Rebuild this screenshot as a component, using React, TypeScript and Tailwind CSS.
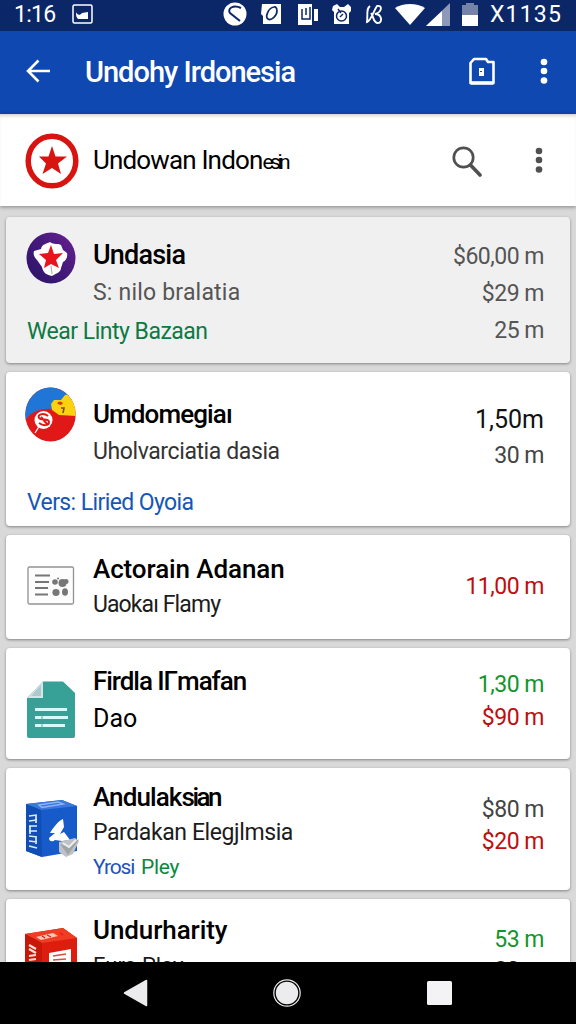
import type { ReactNode } from 'react';
import clsx from 'clsx';

type Line = { text: ReactNode; className: string };

type Item = {
  id: string;
  card: string;
  icon: ReactNode;
  iconClass: string;
  linesClass: string;
  lines: Line[];
  footer?: Line;
  valuesClass: string;
  values: Line[];
};

const UndasiaIcon = () => (
  <svg width="50" height="52" viewBox="0 0 50 52">
    <defs>
      <linearGradient id="purple" x1="0" y1="1" x2="1" y2="0">
        <stop offset="0" stopColor="#2a1466" />
        <stop offset="0.5" stopColor="#43197a" />
        <stop offset="1" stopColor="#6a2191" />
      </linearGradient>
    </defs>
    <ellipse cx="25" cy="26" rx="24.5" ry="25.5" fill="url(#purple)" />
    <path
      d="M24 10C28 13 32 11 35 13L37 18 41 21C42 25 40 29 37 30L35 36C35 40 31 41 26 44C21 43 17 41 16 35L11 28C8 25 7 22 8 19L15 17C16 12 20 12 24 10z"
      fill="#fff"
    />
    <path
      d="M25 13l3 9 9-1-7 7 3 8-8-4-7 4 2-8-7-6 9-1z"
      fill="#e8141c"
    />
    <path d="M25 34l1 8" stroke="#aaa" strokeWidth="1" />
  </svg>
);

const UmdomegiaIcon = () => (
  <svg width="51" height="55" viewBox="0 0 51 55">
    <defs>
      <clipPath id="disc">
        <ellipse cx="25.5" cy="27.5" rx="25.2" ry="27" />
      </clipPath>
    </defs>
    <g clipPath="url(#disc)">
      <rect width="51" height="55" fill="#e01818" />
      <path d="M0 0H51V12L27 22C16 21 5 25 0 34z" fill="#2076d6" />
      <path d="M40 8L51 6V29L34 28 27 23 26 17 29 13 36 13z" fill="#fbd20f" />
      <path d="M32 16q3-3 6 0q-2 4-6 0z" fill="#d53a14" />
      <path d="M36 21h3l-1 5" fill="none" stroke="#78501c" strokeWidth="1.6" />
      <circle cx="18.500" cy="33" r="9" fill="#fff" />
      <path d="M15 38L10 46" stroke="#fff" strokeWidth="1.2" />
      <path
        d="M23 29C18 25 12 28 14 31S24 31 24 35S18 39 14 36M16 30L22 37"
        fill="none"
        stroke="#e01818"
        strokeWidth="2"
      />
    </g>
  </svg>
);

const NewsIcon = () => (
  <svg width="48" height="40" viewBox="0 0 48 40">
    <rect x="1" y="1" width="45.500" height="37" rx="1.500" fill="#fdfdfd" stroke="#929292" strokeWidth="1.300" />
    <path d="M8 9.500h15M8 16h14M8 22h13M8 28.500h13" stroke="#777" strokeWidth="2" />
    <g fill="#777">
      <circle cx="28" cy="16" r="2.800" />
      <circle cx="35.500" cy="17" r="4" />
      <circle cx="39" cy="15.500" r="2.500" />
      <circle cx="31" cy="12.500" r="1" />
      <ellipse cx="29" cy="26.500" rx="3.600" ry="3.400" />
      <ellipse cx="38" cy="26" rx="3" ry="3.800" />
    </g>
  </svg>
);

const DocIcon = () => (
  <svg width="48" height="58" viewBox="0 0 48 58">
    <path d="M16 .5H36L48 12V55a2 2 0 0 1-2 2H2a2 2 0 0 1-2-2V17z" fill="#37a097" />
    <path d="M16 .5V17H0z" fill="#d5e4e7" />
    <path d="M14 4V15H4z" fill="#afc8cd" />
    <path d="M8 28.500H40M8 36.500H41M8 44.500H38" stroke="#d5fbf6" strokeWidth="2.800" />
    <path d="M15 35V46" stroke="#37a097" strokeWidth=".8" />
  </svg>
);

const BlueBoxIcon = () => (
  <svg width="54" height="60" viewBox="0 0 54 60">
    <path d="M0 5L36 1 51 7V52L16 58 0 52z" fill="#175bcb" />
    <path d="M0 5L36 1 51 7 15 11z" fill="#3b78dc" />
    <path d="M0 5L15 11 16 58 0 52z" fill="#104eb5" />
    <path d="M13 6L32 3 37 5 16 8.500z" fill="none" stroke="#8bb4f4" strokeWidth="1.600" />
    <path
      d="M3 17l8-1M3 22l8-1M3 27l8 0M3 32l8 0M3 37l8 1M3 42l8 1M3 47l8 2M10 16v8M4 27v8M10 38v7"
      stroke="#dcebff"
      strokeWidth="1.700"
    />
    <path d="M37 20C32 22 27 29 24 34L29 34 23 39C23 43 27 43 29 41L36 42 44 41 38 33 34 35 38 28z" fill="#fff" />
    <path d="M33 43L49 39 53 42 47 55 40 58 33 53z" fill="#bfc2c5" />
    <path d="M34 45L42 48 53 40 42 56z" fill="#9fa4a7" />
    <path d="M37 44L43 48 50 41" fill="none" stroke="#eee" strokeWidth="1.800" />
  </svg>
);

const RedBoxIcon = () => (
  <svg width="53" height="60" viewBox="0 0 53 60">
    <path d="M0 6L38 0 52 10V60H0z" fill="#dd1d0d" />
    <path d="M0 6L38 0 52 10 17 15z" fill="#ee3d23" />
    <path d="M0 6L17 15V60H0z" fill="#c8160a" />
    <path d="M11 9L28 5 33 8 16 12z" fill="#ffc4b5" />
    <path d="M17 8l3 2M22 7l4 2M35 5l3 2" stroke="#dd1d0d" strokeWidth="1.300" />
    <path d="M4 17l7 4M4 21l7 4M4 28l7-1M4 32l7-1M4 37l7-1" stroke="#ffe0d8" strokeWidth="2.200" />
    <path d="M24 25L46 21V40H24z" fill="#fff" />
    <path d="M28 28l13-2M28 32l13-1M28 36h8" stroke="#d8503c" strokeWidth="1.700" />
  </svg>
);

const title = 'text-[26px] font-medium text-black';
const sub = 'text-[23px] text-[#1c1c1c]';
const value = 'text-[23px] tracking-[-0.5px]';

const items: Item[] = [
  {
    id: 'undasia',
    card: 'h-[146px] bg-[#f0f0f0]',
    icon: <UndasiaIcon />,
    iconClass: '-mt-[5px] ml-[1px]',
    linesClass: 'pt-[20px] leading-[37px]',
    lines: [
      { text: 'Undasia', className: 'text-[27px] font-medium tracking-[-0.8px] text-black' },
      { text: 'S: nilo bralatia', className: 'text-[23px] tracking-[0.2px] text-[#555]' },
    ],
    footer: { text: 'Wear Linty Bazaan', className: 'mt-[2px] tracking-[-0.5px] text-[#0b7a43]' },
    valuesClass: 'pt-[21px] leading-[37px]',
    values: [
      { text: '$60,00 m', className: 'text-[#555]' },
      { text: '$29 m', className: 'text-[#555]' },
      { text: '25 m', className: 'text-[#555]' },
    ],
  },
  {
    id: 'umdomegiai',
    card: 'h-[154px] bg-white',
    icon: <UmdomegiaIcon />,
    iconClass: '-mt-[9px]',
    linesClass: 'pt-[24px] leading-[37px]',
    lines: [
      { text: 'Umdomegiaı', className: clsx(title, 'tracking-[-0.9px]') },
      { text: 'Uholvarciatia dasia', className: 'text-[23px] tracking-[-0.4px] text-[#333]' },
    ],
    footer: { text: 'Vers: Liried Oyoia', className: 'mt-[14px] tracking-[-0.6px] text-[#1556b8]' },
    valuesClass: 'pt-[30px] leading-[36px]',
    values: [
      { text: '1,50m', className: 'text-[25px] tracking-[0px] text-[#111]' },
      { text: '30 m', className: 'text-[#444]' },
    ],
  },
  {
    id: 'actorain',
    card: 'h-[104px] bg-white',
    icon: <NewsIcon />,
    iconClass: 'mt-[15px] ml-[2px]',
    linesClass: 'pt-[16px] leading-[36px]',
    lines: [
      { text: 'Actorain Adanan', className: clsx(title, 'tracking-[-0.1px]') },
      { text: 'Uaokaı Flamy', className: clsx(sub, 'tracking-[-0.9px]') },
    ],
    valuesClass: 'pt-[34px] leading-[36px]',
    values: [{ text: '11,00 m', className: 'text-[#c00d10]' }],
  },
  {
    id: 'firdla',
    card: 'h-[111px] bg-white',
    icon: <DocIcon />,
    iconClass: 'mt-[18px] ml-[2px]',
    linesClass: 'pt-[15px] leading-[37px]',
    lines: [
      { text: 'Firdla IΓmafan', className: clsx(title, 'tracking-[-1.05px]') },
      { text: 'Dao', className: 'text-[25px] text-black' },
    ],
    valuesClass: 'pt-[20px] leading-[33px]',
    values: [
      { text: '1,30 m', className: 'text-[#12962b]' },
      { text: '$90 m', className: 'text-[#c00d10]' },
    ],
  },
  {
    id: 'andulaksian',
    card: 'h-[122px] bg-white',
    icon: <BlueBoxIcon />,
    iconClass: 'mt-[19px] ml-[1px]',
    linesClass: 'pt-[12px] leading-[35px]',
    lines: [
      {
        text: (
          <>
            Andulak<span className="tracking-[-2.500px]">sian</span>
          </>
        ),
        className: clsx(title, 'tracking-[-0.9px]'),
      },
      { text: 'Pardakan Elegjlmsia', className: clsx(sub, 'tracking-[-0.4px]') },
      {
        text: (
          <>
            <span className="mr-[2px] tracking-[-1.200px] text-[#2352bd]">Yrosi</span> Pley
          </>
        ),
        className: 'text-[21px] tracking-[-0.3px] text-[#0d8740]',
      },
    ],
    valuesClass: 'pt-[26px] leading-[32px]',
    values: [
      { text: '$80 m', className: 'text-[#444]' },
      { text: '$20 m', className: 'text-[#c00d10]' },
    ],
  },
  {
    id: 'undurharity',
    card: 'h-[120px] bg-white',
    icon: <RedBoxIcon />,
    iconClass: 'mt-[15px]',
    linesClass: 'pt-[14px] leading-[35px]',
    lines: [
      { text: 'Undurharity', className: clsx(title, 'tracking-[-0.1px]') },
      { text: 'Eura Play', className: 'text-[22px] text-[#1c1c1c]' },
    ],
    valuesClass: 'pt-[25px] leading-[31px]',
    values: [
      { text: '53 m', className: 'text-[#12962b]' },
      { text: '80 m', className: 'text-[#222]' },
    ],
  },
];

const MoreDots = ({ className }: { className?: string }) => (
  <svg width="10" height="28" viewBox="0 0 10 28" fill="currentColor" className={className}>
    <circle cx="5" cy="5" r="3.300" />
    <circle cx="5" cy="14" r="3.300" />
    <circle cx="5" cy="23.500" r="3.300" />
  </svg>
);

const StatusBar = () => (
  <div className="flex h-[31px] shrink-0 items-center bg-[#0c2768] pr-[13px] pl-[14px] text-[23px] leading-[28px] text-white">
    <span className="-mt-[2px] w-[58px] tracking-[-0.7px]">1:16</span>
    <svg width="21" height="20" viewBox="0 0 21 20" className="-mt-[3px]">
      <rect x="1" y="1" width="19" height="18" rx="1.500" fill="none" stroke="#fff" strokeWidth="1.500" />
      <path d="M4 8C5 11 8 12 10 9L16 8V15H6C4 13 4 11 4 8z" fill="#fff" />
    </svg>
    <div className="-mt-[3px] ml-auto flex items-center">
      <svg width="24" height="24" viewBox="0 0 24 24">
        <circle cx="12" cy="12" r="11.500" fill="#fff" />
        <path d="M18 6C10 2 4 7 7 11L17 19" fill="none" stroke="#0c2768" strokeWidth="2" />
      </svg>
      <svg width="20" height="20" viewBox="0 0 20 20" className="ml-[14px]">
        <path d="M1 0H20V20H2V12L0 10z" fill="#fff" />
        <path d="M13 3C7 4 4 13 7 15S16 12 16 7S13 3 13 3z" fill="none" stroke="#0c2768" strokeWidth="1.700" />
      </svg>
      <svg width="20" height="21" viewBox="0 0 20 21" className="ml-[17px]">
        <path d="M0 0H14V21H0zM16 5H20V17H16z" fill="#fff" />
        <path d="M4 5V15H12V3M8 4V11" fill="none" stroke="#0c2768" strokeWidth="1.500" />
      </svg>
      <svg width="20" height="21" viewBox="0 0 20 21" className="ml-[14px]">
        <path d="M1 2L5 0 8 3H12L16 0 19 3V7L17 9V20H2V8L0 6z" fill="#fff" />
        <circle cx="9.500" cy="12" r="5" fill="none" stroke="#0c2768" strokeWidth="1.500" />
        <path d="M6 5L9 9M11 10L8 13" stroke="#0c2768" strokeWidth="1.400" />
      </svg>
      <svg width="18" height="21" viewBox="0 0 18 21" className="ml-[13px]" fill="none" stroke="#fff" strokeWidth="1.900">
        <path d="M5 2C1 5 3 9 2 18C6 17 8 8 12 2C18 1 17 8 10 10C17 10 18 19 13 19S9 13 6 9" />
      </svg>
      <svg width="30" height="22" viewBox="0 0 30 22" className="ml-[12px]">
        <path d="M0 5C8-.5 22-.5 30 5L15 22z" fill="#fff" />
      </svg>
      <svg width="24" height="23" viewBox="0 0 24 23" className="ml-[1px]">
        <path d="M24 0V23H0z" fill="#8e98b8" />
        <path d="M16 8V23H0z" fill="#fff" />
      </svg>
      <svg width="16" height="23" viewBox="0 0 16 23" className="ml-[12px]">
        <path d="M0 2H4V0H12V2H16V12H0z" fill="#7683a9" />
        <path d="M0 12H16V23H0z" fill="#fff" />
      </svg>
    </div>
    <span className="-mt-[2px] ml-[12px] w-[73px] tracking-[1.200px]">X1135</span>
  </div>
);

const AppBar = () => (
  <header className="flex h-[83px] shrink-0 items-center bg-[#0f48b1] pr-[27px] pl-[26px] text-white">
    <svg width="26" height="24" viewBox="0 0 26 24" fill="none" stroke="currentColor" strokeWidth="2.600" className="-mt-[3px]">
      <path d="M24 12H2M12.500 1.500L2 12 12.500 22.500" />
    </svg>
    <h1 className="ml-[33px] flex-1 text-[29px] font-medium tracking-[-1px]">Undohy Irdonesia</h1>
    <svg width="26" height="29" viewBox="0 0 26 29" className="-mt-[3px]">
      <path d="M1.500 6L5 2H17L19 5H24.500V26H1.500z" fill="none" stroke="#fff" strokeWidth="2.600" strokeLinejoin="round" />
      <path d="M1.500 26H24.500" stroke="#fff" strokeWidth="3.500" />
      <path d="M10 11H15V19H10z" fill="#fff" />
      <path d="M11 14.500H13" stroke="#0f48b1" />
    </svg>
    <MoreDots className="-mt-[3px] ml-[44px]" />
  </header>
);

const SearchHeader = () => (
  <div className="z-10 flex h-[92px] shrink-0 items-center bg-white pr-[32px] pl-[25px] shadow-[0_1px_4px_rgba(0,0,0,0.4),inset_0_4px_4px_-3px_rgba(0,0,0,0.25)]">
    <svg width="54" height="56" viewBox="0 0 54 56" className="mt-[1px]">
      <ellipse cx="27" cy="28" rx="23.800" ry="24.800" fill="#fff" stroke="#d81410" strokeWidth="5.500" />
      <path d="M27 13L30.500 23.500 42 23.500 33 30.500 36 41 27 35 17.500 41 21 30.500 14 23.500 23.500 23.500z" fill="#d81410" />
    </svg>
    <h2 className="ml-[14px] flex-1 text-[26px] tracking-[-0.85px] text-black">
      Undowan Indon<span className="text-[21px] tracking-[-3.500px]">esin</span>
    </h2>
    <svg width="30" height="31" viewBox="0 0 30 31" fill="none" stroke="#505050" className="mt-[2px]">
      <circle cx="11.500" cy="11.500" r="9.700" strokeWidth="2.700" />
      <path d="M18.500 19L28 29" strokeWidth="3.600" strokeLinecap="round" />
    </svg>
    <MoreDots className="ml-[52px] text-[#505050]" />
  </div>
);

const ItemCard = ({ item }: { item: Item }) => (
  <article className={clsx('flex shrink-0 rounded-[4px] pr-[26px] pl-[19px] shadow-[0_1px_3px_rgba(0,0,0,0.4)]', item.card)}>
    <div className={clsx('flex-1 whitespace-nowrap', item.linesClass)}>
      <div className="flex items-start">
        <div className="h-0 w-[68px] shrink-0">
          <div className={item.iconClass}>{item.icon}</div>
        </div>
        <div>
          {item.lines.map((line, i) => (
            <p key={i} className={line.className}>
              {line.text}
            </p>
          ))}
        </div>
      </div>
      {item.footer && (
        <p className={clsx('ml-[2px] text-[23px]', item.footer.className)}>{item.footer.text}</p>
      )}
    </div>
    <div className={clsx('text-right whitespace-nowrap', item.valuesClass)}>
      {item.values.map((line, i) => (
        <p key={i} className={clsx(value, line.className)}>
          {line.text}
        </p>
      ))}
    </div>
  </article>
);

const NavBar = () => (
  <nav className="z-10 flex h-[62px] shrink-0 items-center bg-black pl-[123px]">
    <svg width="25" height="28" viewBox="0 0 25 28">
      <path d="M23.500 1.500V26.500L1.500 14z" fill="#ececee" stroke="#ececee" strokeWidth="1.500" strokeLinejoin="round" />
    </svg>
    <svg width="30" height="30" viewBox="0 0 30 30" className="ml-[124px]">
      <circle cx="15" cy="15" r="13.200" fill="none" stroke="#ececee" strokeWidth="1.200" />
      <circle cx="15" cy="15" r="11.200" fill="#ececee" />
    </svg>
    <div className="ml-[125px] h-[24px] w-[25px] rounded-[1.500px] bg-[#f3f3f5]" />
  </nav>
);

export default function App() {
  return (
    <div className="flex h-[1024px] w-[576px] flex-col overflow-hidden bg-[#d9d9da] font-[Roboto,sans-serif]">
      <StatusBar />
      <AppBar />
      <SearchHeader />
      <main className="flex min-h-0 flex-1 flex-col gap-[9px] overflow-hidden px-[6px] pt-[11px]">
        {items.map(item => (
          <ItemCard key={item.id} item={item} />
        ))}
      </main>
      <NavBar />
    </div>
  );
}
